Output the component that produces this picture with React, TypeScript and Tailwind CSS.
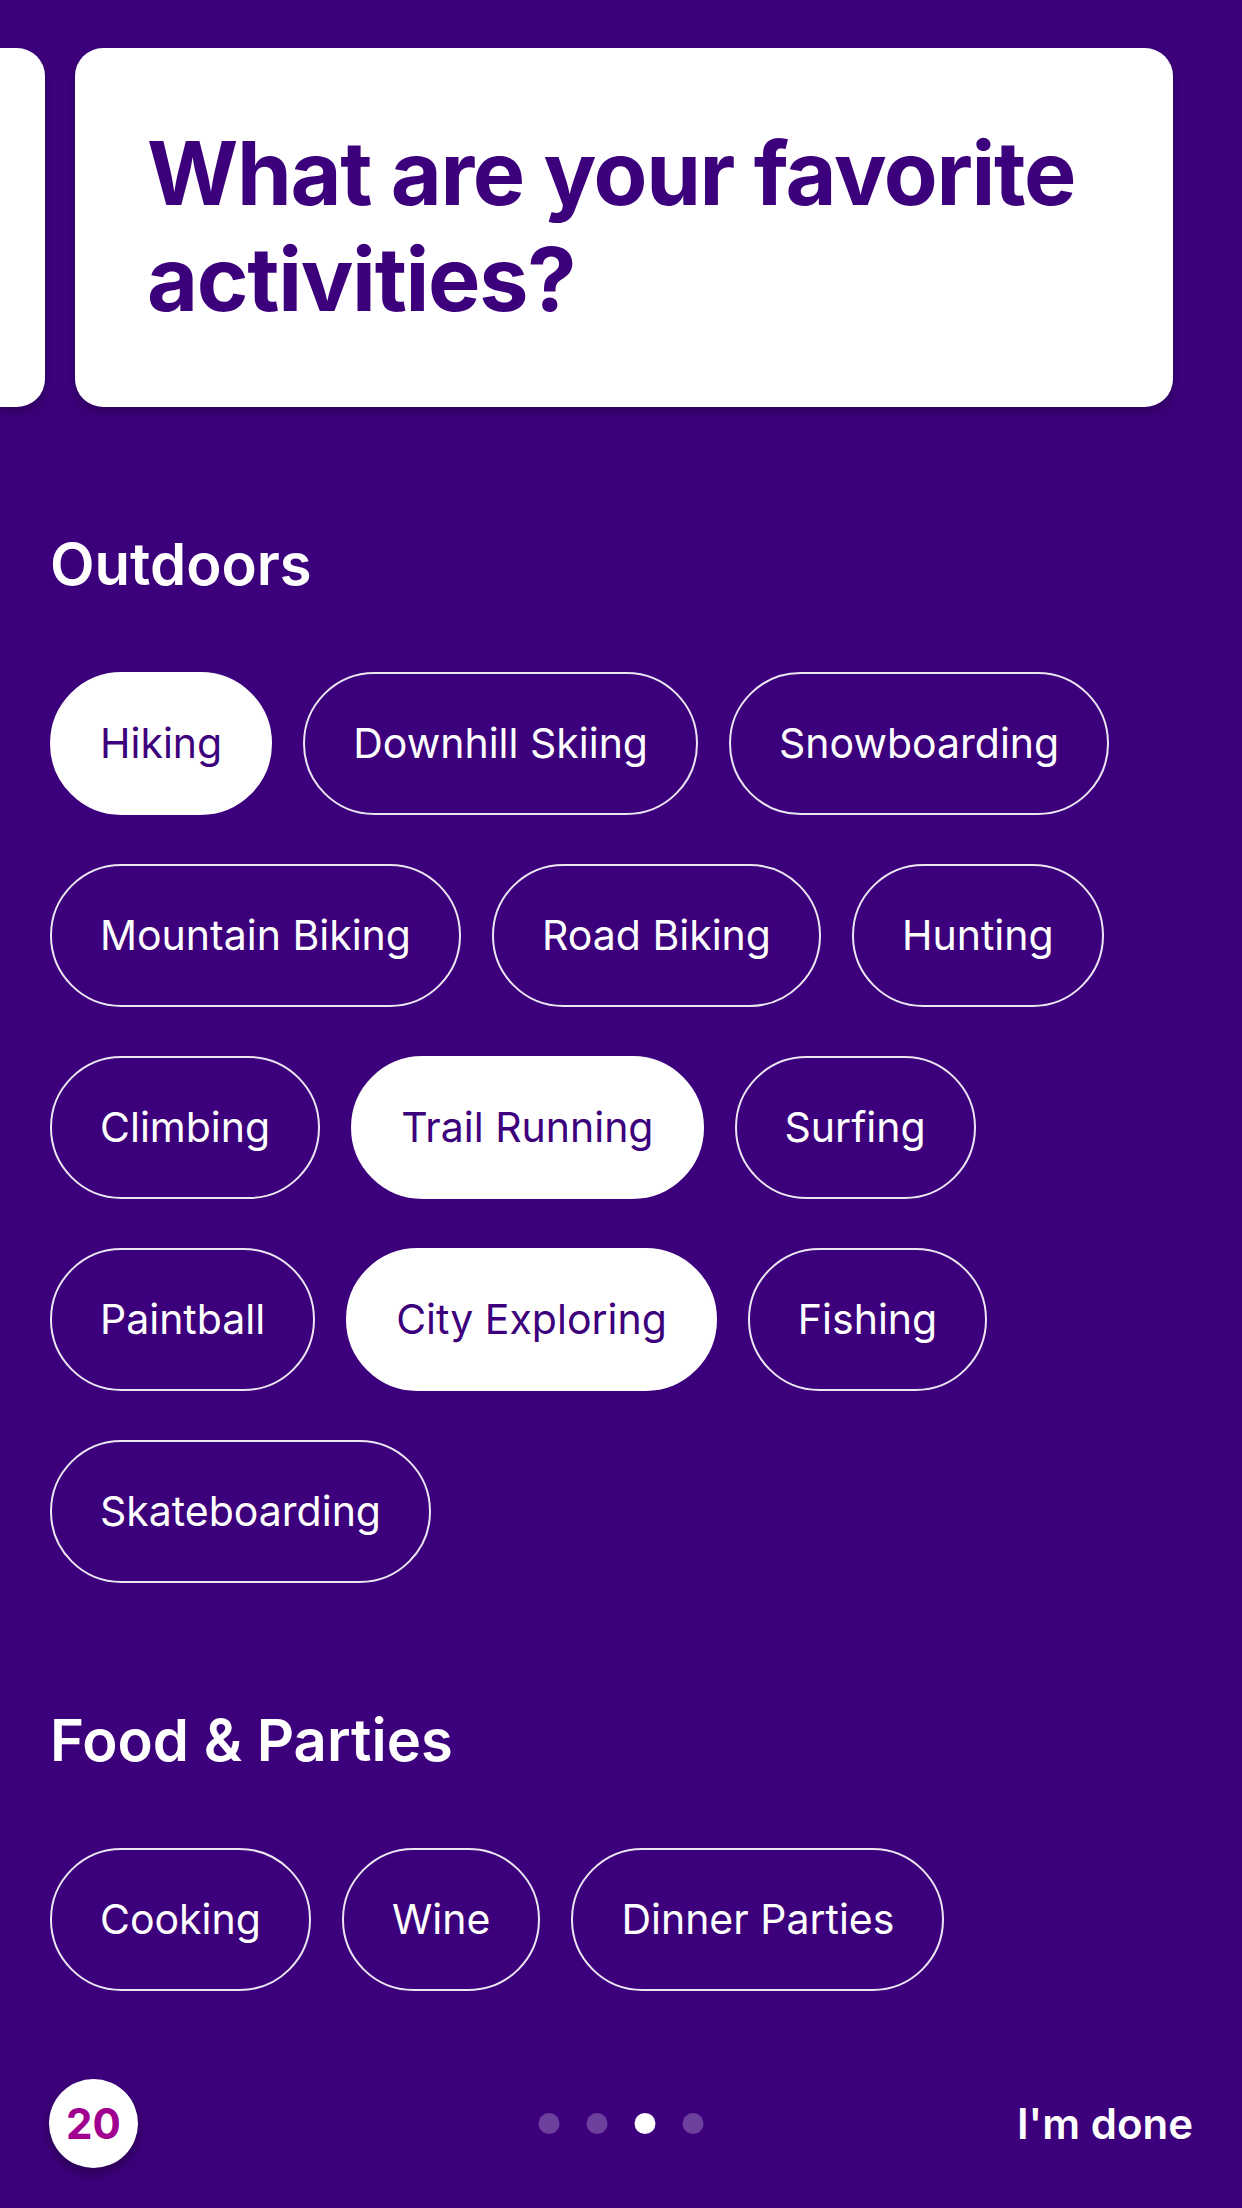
import React from "react";

const sections: { title: string; items: { label: string; on?: boolean }[] }[] = [
  {
    title: "Outdoors",
    items: [
      { label: "Hiking", on: true },
      { label: "Downhill Skiing" },
      { label: "Snowboarding" },
      { label: "Mountain Biking" },
      { label: "Road Biking" },
      { label: "Hunting" },
      { label: "Climbing" },
      { label: "Trail Running", on: true },
      { label: "Surfing" },
      { label: "Paintball" },
      { label: "City Exploring", on: true },
      { label: "Fishing" },
      { label: "Skateboarding" },
    ],
  },
  {
    title: "Food & Parties",
    items: [{ label: "Cooking" }, { label: "Wine" }, { label: "Dinner Parties" }],
  },
];

function Chip({ label, on }: { label: string; on?: boolean }) {
  return (
    <button
      className={
        on
          ? "h-[143px] px-[48px] rounded-full border-2 border-white bg-white text-[#3d007c] text-[41px] leading-none"
          : "h-[143px] px-[48px] rounded-full border-2 border-white/90 text-white text-[41px] leading-none"
      }
    >
      {label}
    </button>
  );
}

export default function App() {
  return (
    <div
      className="w-[1242px] h-[2208px] bg-[#3d007c] overflow-hidden flex flex-col"
      style={{ fontFamily: "Inter, 'Noto Sans', sans-serif" }}
    >
      {/* carousel */}
      <div className="pt-[48px] flex gap-[30px]">
        <div className="w-[45px] h-[359px] shrink-0 bg-white rounded-r-[28px] shadow-[0_6px_12px_rgba(0,0,0,0.25)]" />
        <div className="w-[1098px] h-[359px] shrink-0 bg-white rounded-[28px] shadow-[0_6px_12px_rgba(0,0,0,0.25)] pl-[72px] pr-[74px] pt-[72px]">
          <h1 className="text-[88px] leading-[106px] font-bold tracking-[-0.015em] text-[#3d007c]">
            What are your favorite activities?
          </h1>
        </div>
      </div>

      {/* categories */}
      <div className="px-[50px]">
        {sections.map((s) => (
          <section key={s.title} className="mt-[128px]">
            <h2 className="text-[58px] leading-[58px] font-semibold text-white">{s.title}</h2>
            <div className="mt-[79px] flex flex-wrap gap-x-[31px] gap-y-[49px]">
              {s.items.map((it) => (
                <Chip key={it.label} label={it.label} on={it.on} />
              ))}
            </div>
          </section>
        ))}
      </div>

      {/* footer */}
      <div className="mt-auto mb-[40px] px-[49px] h-[89px] relative flex items-center justify-between">
        <div className="w-[89px] h-[89px] rounded-full bg-white flex items-center justify-center shadow-[0_6px_12px_rgba(0,0,0,0.35)]">
          <span className="text-[42px] font-bold text-[#a1008e] leading-none">20</span>
        </div>
        <div className="absolute left-1/2 -translate-x-1/2 flex gap-[27px]">
          <span className="w-[21px] h-[21px] rounded-full bg-white/25" />
          <span className="w-[21px] h-[21px] rounded-full bg-white/25" />
          <span className="w-[21px] h-[21px] rounded-full bg-white" />
          <span className="w-[21px] h-[21px] rounded-full bg-white/25" />
        </div>
        <button className="text-[42px] font-semibold text-white leading-none">I'm done</button>
      </div>
    </div>
  );
}
